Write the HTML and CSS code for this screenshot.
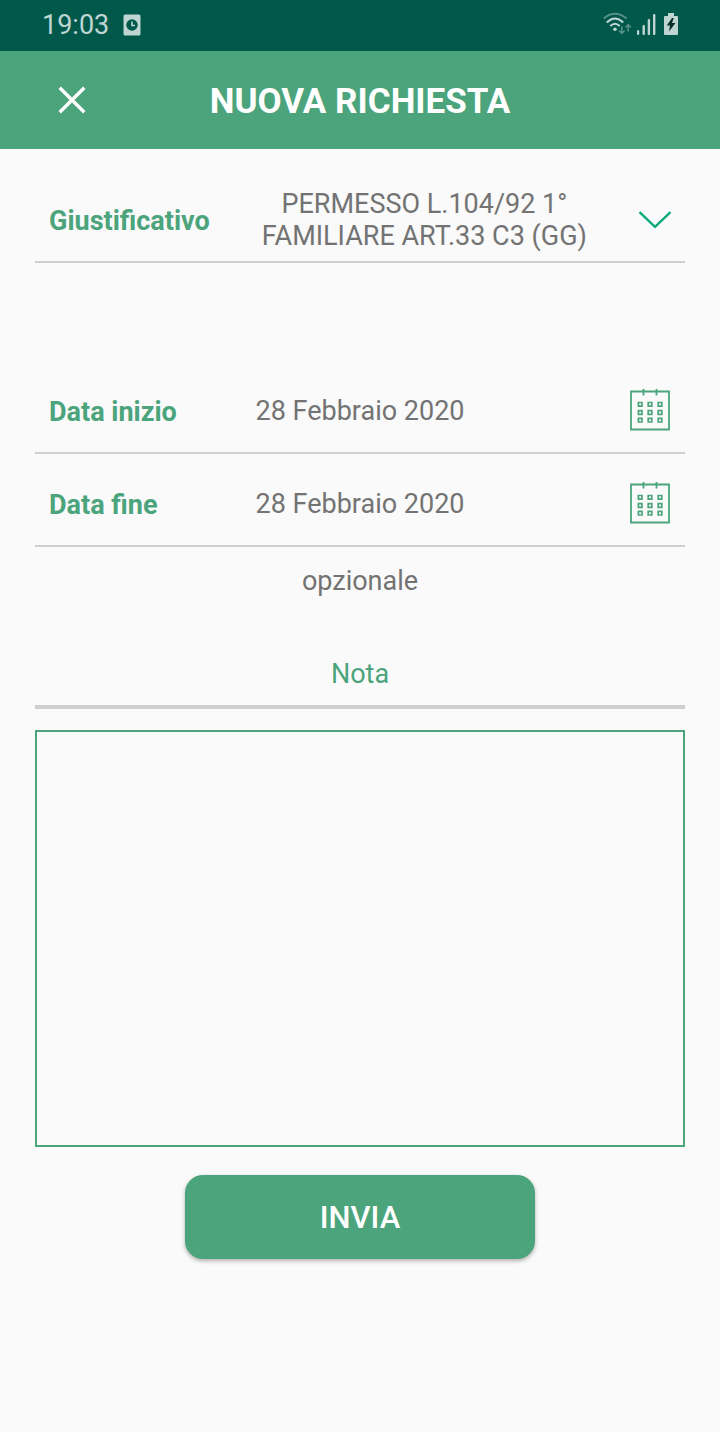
FILE: index.html
```html
<!DOCTYPE html>
<html lang="it">

	<head>
		<meta charset="utf-8">
		<meta name="viewport" content="width=device-width, initial-scale=1">
		<title>Nuova richiesta</title>
		<link rel="stylesheet" href="styles.css">
	</head>

	<body>

		<div class="status-bar">
			<div class="status-left">
				<span>19:03</span>
				<svg width="18" height="22" viewBox="0 0 18 22">
					<rect x="0.5" y="0.5" width="17" height="21" rx="1.5" fill="#bfd5d2"/>
					<circle cx="9" cy="11" r="5.7" fill="#00584a"/>
					<path d="M9 7.5V11.5H12" fill="none" stroke="#bfd5d2" stroke-width="1.6"/>
				</svg>
			</div>
			<div class="status-right">
				<svg width="28" height="24" viewBox="0 0 28 24" fill="none" stroke="#bfd5d2" stroke-width="2">
					<path d="M0.7 6.5Q12 -3 23.5 6.5" opacity="0.45"/>
					<path d="M3.7 10.5Q12 2.5 20.2 10.5"/>
					<path d="M7.3 14Q12 9.5 16.7 14"/>
					<circle cx="12" cy="17.3" r="1.8" fill="#bfd5d2" stroke="none"/>
					<path d="M18.8 14.5V21M16 18.5L18.8 21.3L21.6 18.5M25.2 19.5V13M22.5 15.5L25.2 12.7L27.9 15.5" opacity="0.45" stroke-width="1.6"/>
				</svg>
				<svg width="19" height="22" viewBox="0 0 19 22" fill="#bfd5d2">
					<rect x="0" y="17" width="2.2" height="5" rx="1"/>
					<rect x="5.5" y="12" width="2.4" height="10" rx="1"/>
					<rect x="10.7" y="6" width="2.4" height="16" rx="1"/>
					<rect x="16" y="1" width="2.4" height="21" rx="1"/>
				</svg>
				<svg width="14" height="22" viewBox="0 0 14 22">
					<path d="M4 0H10V3H13Q14 3 14 4V21Q14 22 13 22H1Q0 22 0 21V4Q0 3 1 3H4Z" fill="#bfd5d2"/>
					<path d="M8 5L2.8 12.5H6L5 18.5L11.5 10H8L9.8 5Z" fill="#072f29"/>
				</svg>
			</div>
		</div>

		<header class="header">
			<button type="button" class="icon-button" aria-label="Chiudi">
				<svg width="28" height="28" viewBox="0 0 28 28">
					<path d="M1.7 1.7L26.3 26.3M26.3 1.7L1.7 26.3" stroke="#fff" stroke-width="3.4"/>
				</svg>
			</button>
			<h1>NUOVA RICHIESTA</h1>
		</header>

		<form class="request-form">

			<div class="row row-select">
				<label for="reason">Giustificativo</label>
				<select id="reason" name="reason">
					<option>PERMESSO L.104/92 1° FAMILIARE ART.33 C3 (GG)</option>
				</select>
				<svg class="chevron" width="32" height="18" viewBox="0 0 32 18">
					<path d="M0.5 1L16 15.8L31.5 1" fill="none" stroke="#0aa97c" stroke-width="2.4"/>
				</svg>
			</div>

			<div class="row row-date">
				<label for="start-date">Data inizio</label>
				<input type="text" id="start-date" name="start-date" value="28 Febbraio 2020">
				<button type="button" class="icon-button" aria-label="Scegli data inizio">
					<svg width="41" height="43" viewBox="0 0 41 43" fill="none" stroke="#4ba47c" stroke-width="1.7">
						<path d="M1 2.5H39V40.5H1ZM13.5 0V6.5M26.5 0V6.5" stroke-width="1.8"/>
						<path d="M8.4 13.5h3.6v3.6h-3.6zM18.2 13.5h3.6v3.6h-3.6zM28.2 13.5h3.6v3.6h-3.6zM8.4 21.7h3.6v3.6h-3.6zM18.2 21.7h3.6v3.6h-3.6zM28.2 21.7h3.6v3.6h-3.6zM8.4 29.4h3.6v3.6h-3.6zM18.2 29.4h3.6v3.6h-3.6zM28.2 29.4h3.6v3.6h-3.6z"/>
					</svg>
				</button>
			</div>

			<div class="row row-date">
				<label for="end-date">Data fine</label>
				<input type="text" id="end-date" name="end-date" value="28 Febbraio 2020">
				<button type="button" class="icon-button" aria-label="Scegli data fine">
					<svg width="41" height="43" viewBox="0 0 41 43" fill="none" stroke="#4ba47c" stroke-width="1.7">
						<path d="M1 2.5H39V40.5H1ZM13.5 0V6.5M26.5 0V6.5" stroke-width="1.8"/>
						<path d="M8.4 13.5h3.6v3.6h-3.6zM18.2 13.5h3.6v3.6h-3.6zM28.2 13.5h3.6v3.6h-3.6zM8.4 21.7h3.6v3.6h-3.6zM18.2 21.7h3.6v3.6h-3.6zM28.2 21.7h3.6v3.6h-3.6zM8.4 29.4h3.6v3.6h-3.6zM18.2 29.4h3.6v3.6h-3.6zM28.2 29.4h3.6v3.6h-3.6z"/>
					</svg>
				</button>
			</div>

			<p class="hint">opzionale</p>

			<label class="note-label" for="note">Nota</label>
			<textarea id="note" name="note"></textarea>

			<button type="submit" class="submit">INVIA</button>

		</form>

	</body>

</html>
```
FILE: styles.css
```css
* { box-sizing:border-box; }
body {
	margin:0;
	background:#fafafa;
	color:#737373;
	font-family:Roboto, sans-serif;
	font-size:27px;
	line-height:32px;
}
svg { display:block; }
input, select, textarea, button {
	font:inherit;
	color:inherit;
	background:none;
	border:0;
	padding:0;
	margin:0;
}

/* status bar */
.status-bar {
	display:flex;
	justify-content:space-between;
	height:51px;
	padding:0 42px;
	background:#00584a;
	color:#bfd5d2;
}
.status-left, .status-right {
	display:flex;
	align-items:center;
	padding-bottom:2px;
}
.status-left { gap:14px; }
.status-right { gap:6px; padding-bottom:4px; }
.status-right svg:last-child { margin-left:2px; }

/* title bar */
.header {
	display:grid;
	grid-template-columns:1fr auto 1fr;
	align-items:center;
	height:98px;
	padding:0 58px;
	background:#4ba47c;
	color:#fff;
}
.header h1 {
	margin:0;
	padding-top:4px;
	font-size:35px;
	line-height:40px;
}
.icon-button {
	justify-self:start;
	cursor:pointer;
}

/* form */
.request-form {
	display:flex;
	flex-direction:column;
	padding:21px 35px;
}
.row {
	min-height:93px;
	padding:8px 14px 0;
	align-items:center;
	border-bottom:2px solid #cfcfcf;
}
.row label {
	padding-top:2px;
	color:#4ba47c;
	font-weight:bold;
}
.row-select {
	display:flex;
	margin-bottom:98px;
}
.row-select select {
	flex:1;
	min-width:0;
	height:64px;
	padding:0 48px;
	appearance:none;
	white-space:normal;
	text-align:center;
	text-align-last:center;
}
.row-date {
	display:grid;
	grid-template-columns:1fr 2fr 1fr;
}
.row-date input {
	width:100%;
	text-align:center;
}
.row-date .icon-button { justify-self:end; }
.hint {
	margin:18px 0 0;
	text-align:center;
}
.note-label {
	margin-top:61px;
	padding-bottom:15px;
	border-bottom:4px solid #cfcfcf;
	color:#4ba47c;
	text-align:center;
}
textarea {
	height:417px;
	margin-top:21px;
	border:2px solid #4ba47c;
	resize:none;
}
.submit {
	align-self:center;
	width:350px;
	max-width:100%;
	margin-top:28px;
	padding:27px 26px 25px;
	border-radius:18px;
	background:#4ba47c;
	box-shadow:0 2px 4px rgba(0, 0, 0, 0.3);
	color:#fff;
	font-size:31px;
	font-weight:500;
}
```
